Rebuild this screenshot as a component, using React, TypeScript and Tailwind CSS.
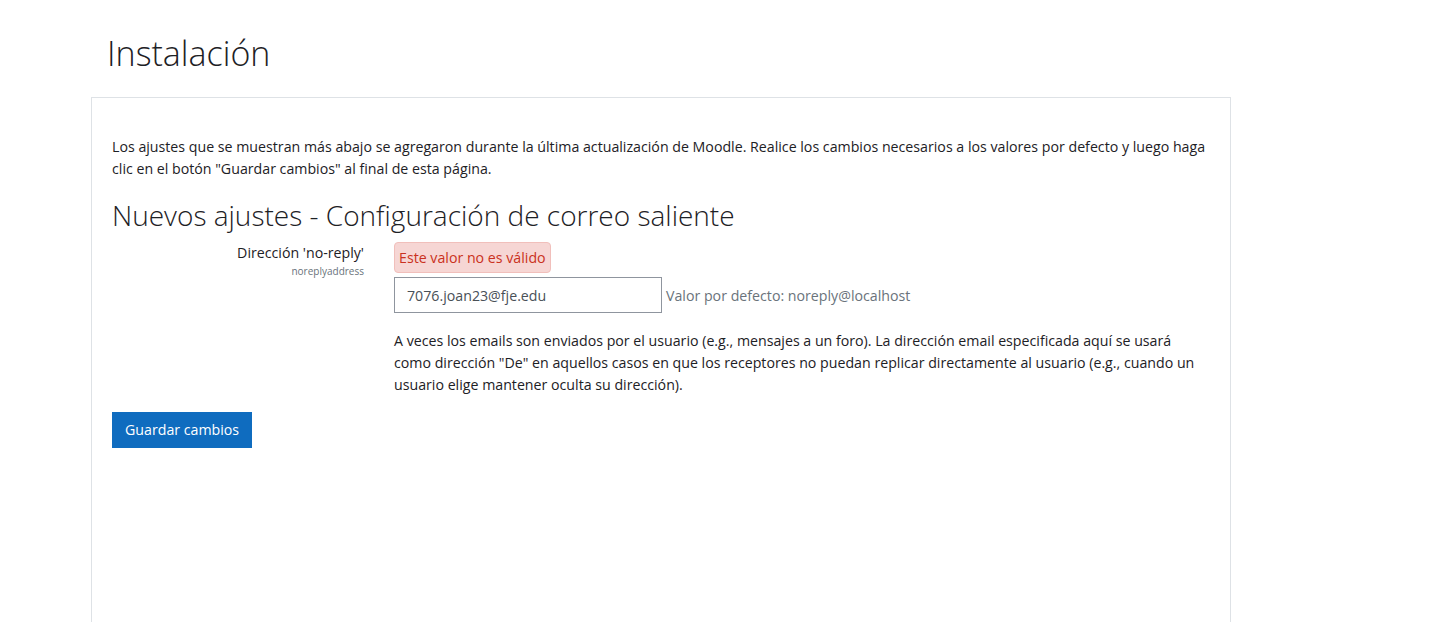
const font = { fontFamily: "'Open Sans', 'Noto Sans', sans-serif" };

function SettingRow() {
  return (
    <div className="grid grid-cols-[252px_1fr] gap-x-[30px]">
      <div className="text-right">
        <div className="text-[14.2px] leading-[22px] text-[#1d2125]">Dirección 'no-reply'</div>
        <div className="text-[10px] leading-[14px] text-[#6a737b]">noreplyaddress</div>
      </div>
      <div>
        <div className="inline-block rounded-[4px] border border-[#f1bfbb] bg-[#f6d6d4] px-[4px] py-[3.5px] text-[14.2px] leading-[22px] text-[#ca3120]">
          Este valor no es válido
        </div>
        <div className="mt-[4px] flex items-center">
          <input
            defaultValue="7076.joan23@fje.edu"
            className="h-[36px] w-[268px] border border-[#8f959e] bg-white px-[12px] text-[14.2px] text-[#495057] outline-none"
            style={font}
          />
          <span className="ml-[4px] text-[14.2px] text-[#6a737b]">Valor por defecto: noreply@localhost</span>
        </div>
        <p className="mt-[17px] pr-[12px] text-[14.2px] leading-[22px] text-[#1d2125]">
          A veces los emails son enviados por el usuario (e.g., mensajes a un foro). La dirección email especificada aquí se usará como dirección "De" en aquellos casos en que los receptores no puedan replicar directamente al usuario (e.g., cuando un usuario elige mantener oculta su dirección).
        </p>
      </div>
    </div>
  );
}

export default function App() {
  return (
    <div className="h-[622px] overflow-hidden bg-white pl-[91px]" style={font}>
      <h1 className="ml-[16px] pt-[33px] text-[34px] font-light leading-[1.2] text-[#1d2125]">Instalación</h1>
      <div className="mt-[23px] min-h-[600px] w-[1140px] border border-[#dee2e6] px-[20px] pt-[38px]">
        <p className="text-[14.2px] leading-[22px] text-[#1d2125]">
          Los ajustes que se muestran más abajo se agregaron durante la última actualización de Moodle. Realice los cambios necesarios a los valores por defecto y luego haga clic en el botón "Guardar cambios" al final de esta página.
        </p>
        <h3 className="mt-[19px] mb-[10px] text-[28px] font-light leading-[1.2] text-[#1d2125]">
          Nuevos ajustes - Configuración de correo saliente
        </h3>
        <SettingRow />
        <button className="mt-[16px] border border-[#0f6cbf] bg-[#0f6cbf] px-[12px] py-[6px] text-[14.2px] leading-[22px] text-white">
          Guardar cambios
        </button>
      </div>
    </div>
  );
}
